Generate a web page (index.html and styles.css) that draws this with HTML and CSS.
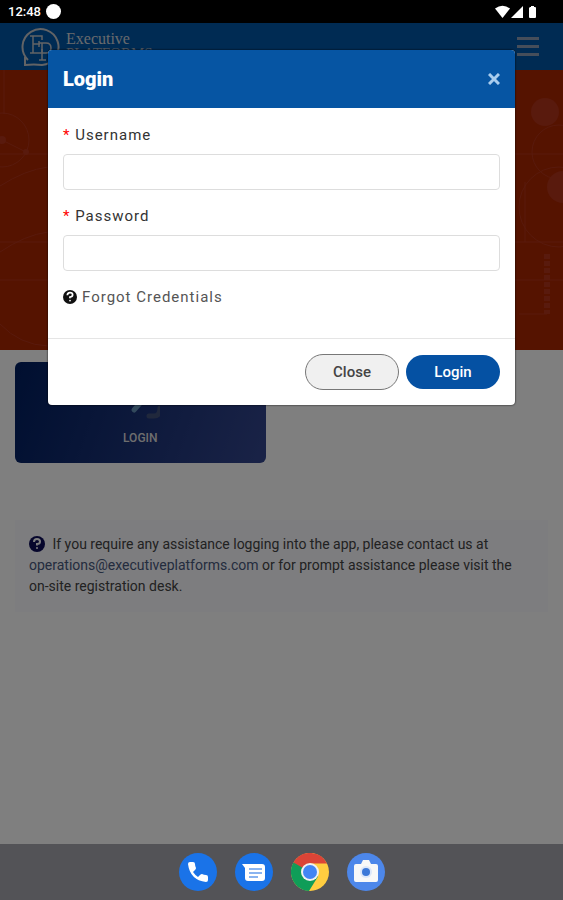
FILE: index.html
```html
<!DOCTYPE html>
<html lang="en">

<head>
    <meta charset="UTF-8" />
    <meta name="viewport" content="width=device-width, initial-scale=1" />
    <title>Login</title>
    <link rel="stylesheet" href="styles.css">
</head>

<body>

    <!-- Status bar -->
    <div class="status-bar">
        <span class="clock">12:48</span>
        <span class="status-dot"></span>
        <svg class="status-icons" width="44" height="14" viewBox="0 0 44 14" fill="#fff">
            <path d="M0 3.500Q7.500-2 15 3.500L7.500 13z" />
            <path d="M28 1v12H16z" />
            <path d="M35 2h1V1h3v1h1q1 0 1 1v9q0 1-1 1h-5q-1 0-1-1V3z" />
        </svg>
    </div>

    <div class="app">
        <header class="navbar">
            <a href="#" class="brand">
                <svg width="40" height="40" viewBox="0 0 40 40" fill="none" stroke="#c4c6ca">
                    <path d="M8 33A18 18 0 1 1 22 38Q14 37 5 38V30" stroke-width="2" />
                    <path d="M10 9h12v4M13 9v17M10 26h12v-4M13 17h7M19 14v6" stroke-width="1.500" />
                    <path d="M19 16h7q5 0 5 5t-5 5h-4M22 16v17M19 33h7" stroke-width="1.500" />
                </svg>
                <span class="brand-text">
                    <span class="brand-name">Executive</span>
                    <span class="brand-sub">PLATFORMS</span>
                </span>
            </a>
            <button class="menu-toggle" aria-label="Menu"><i></i><i></i><i></i></button>
        </header>

        <div class="hero">
            <svg class="hero-art" width="48" height="280" viewBox="0 0 48 280" fill="none">
                <path d="M4 0v44M0 84h48M0 172h48M0 210h48M0 116Q25 100 48 97M0 182Q25 165 48 162M0 254Q20 275 48 276" />
                <circle cx="2" cy="70" r="27" />
                <circle class="fill" cx="2" cy="70" r="4" />
                <path d="M2 70l24 12" />
                <circle class="fill" cx="26" cy="82" r="3" />
            </svg>
            <svg class="hero-art" width="48" height="280" viewBox="0 0 48 280" fill="none">
                <path d="M0 84h48M0 172h48M0 210h48M4 244h28M10 112v60" />
                <circle cx="44" cy="82" r="27" />
                <circle cx="44" cy="137" r="40" />
                <circle class="fill" cx="30" cy="42" r="14" />
                <circle class="fill" cx="48" cy="117" r="16" />
                <path d="M32 184v60" stroke-width="6" stroke-dasharray="5 2" />
            </svg>
        </div>

        <main class="content">
            <a href="#" class="tile">
                <svg width="40" height="40" viewBox="0 0 40 40" fill="none" stroke-width="5" stroke-linecap="round">
                    <path d="M14 31l8-9" stroke="#6592b8" />
                    <path d="M29 37h5q6 0 6-8" stroke="#405078" />
                </svg>
                <span>LOGIN</span>
            </a>

            <p class="help">
                <svg class="help-icon" width="16" height="16" viewBox="0 0 16 16">
                    <circle cx="8" cy="8" r="8" fill="#0c0c58" />
                    <path d="M5 6q0-3 3-3t3 2.500Q11 8 8 8v1.500" fill="none" stroke="#fafaff" stroke-width="2" />
                    <circle cx="8" cy="12" r="1" fill="#fafaff" />
                </svg>
                If you require any assistance logging into the app, please contact us at
                <a href="mailto:operations@executiveplatforms.com">operations@executiveplatforms.com</a>
                or for prompt assistance please visit the on-site registration desk.
            </p>
        </main>

        <!-- Login dialog -->
        <div class="overlay">
            <form class="modal" role="dialog" aria-labelledby="modal-title">
                <div class="modal-header">
                    <h1 id="modal-title">Login</h1>
                    <button type="button" class="modal-x" aria-label="Close dialog">
                        <svg width="12" height="12" viewBox="0 0 12 12" stroke="#a9cdee" stroke-width="3">
                            <path d="M1 1l10 10M11 1L1 11" />
                        </svg>
                    </button>
                </div>
                <div class="modal-body">
                    <label for="username"><span class="required">*</span> Username</label>
                    <input type="text" id="username">
                    <label for="password"><span class="required">*</span> Password</label>
                    <input type="password" id="password">
                    <a href="#" class="forgot">
                        <svg width="14" height="14" viewBox="0 0 16 16">
                            <circle cx="8" cy="8" r="8" fill="#111" />
                            <path d="M5 6q0-3 3-3t3 2.500Q11 8 8 8v1.500" fill="none" stroke="#fff" stroke-width="2" />
                            <circle cx="8" cy="12" r="1" fill="#fff" />
                        </svg>
                        Forgot Credentials
                    </a>
                </div>
                <div class="modal-footer">
                    <button type="button" class="btn btn-close">Close</button>
                    <button type="submit" class="btn btn-login">Login</button>
                </div>
            </form>
        </div>
    </div>

    <!-- Dock -->
    <nav class="dock">
        <a href="#" aria-label="Phone">
            <svg width="38" height="38" viewBox="0 0 38 38">
                <circle cx="19" cy="19" r="19" fill="#1a73e8" />
                <path d="M9 11q0-2 2-2h3q2 0 2 2 0 2 1 4 0 1-1 2l-2 2q2 3 5 5l2-2q1-1 2-1 2 1 4 1 2 0 2 2v3q0 2-2 2Q11 27 9 11z" fill="#fff" />
            </svg>
        </a>
        <a href="#" aria-label="Messages">
            <svg width="38" height="38" viewBox="0 0 38 38">
                <circle cx="19" cy="19" r="19" fill="#1a73e8" />
                <path d="M7 11h20q3 0 3 3v11q0 3-3 3H13q-3 0-3-3V15z" fill="#fff" />
                <path d="M14 16h13M14 20h13M14 24h9" stroke="#8ab4f0" stroke-width="2" />
            </svg>
        </a>
        <a href="#" aria-label="Chrome">
            <svg width="38" height="38" viewBox="0 0 38 38">
                <circle cx="19" cy="19" r="19" fill="#ffcd40" />
                <path d="M2.500 9.500A19 19 0 0 0 18 38l9-14.500L19 19z" fill="#0f9d58" />
                <path d="M2.500 9.500A19 19 0 0 1 36 10.500H19L11 22z" fill="#db4437" />
                <path d="M2.500 9.500L11 24l8-5z" fill="#0f9d58" />
                <circle cx="19" cy="19" r="9" fill="#f1f1f1" />
                <circle cx="19" cy="19" r="7" fill="#4285f4" />
            </svg>
        </a>
        <a href="#" aria-label="Camera">
            <svg width="38" height="38" viewBox="0 0 38 38">
                <circle cx="19" cy="19" r="19" fill="#4d87ea" />
                <path d="M9 11h5l2-4h6l2 4h5q2 0 2 2v14q0 2-2 2H9q-2 0-2-2V13q0-2 2-2z" fill="#f8f8f8" />
                <circle cx="19" cy="19" r="6" fill="#dce7fa" />
                <circle cx="19" cy="19" r="4" fill="#3c78d8" />
            </svg>
        </a>
    </nav>

</body>

</html>
```
FILE: styles.css
```css
* {
    box-sizing: border-box;
}

body {
    margin: 0;
    min-height: 100vh;
    display: flex;
    flex-direction: column;
    font-family: Roboto, "Liberation Sans", sans-serif;
    font-size: 14px;
    color: #333;
    background-color: #fff;
}

a {
    text-decoration: none;
}

svg {
    display: block;
}

button {
    font-family: inherit;
    cursor: pointer;
}

/* Status bar */
.status-bar {
    display: flex;
    align-items: center;
    gap: 5px;
    height: 23px;
    padding: 0 24px 0 8px;
    background-color: #000;
    color: #fff;
}

.clock {
    font-size: 13px;
    font-weight: 500;
}

.status-dot {
    width: 15px;
    height: 15px;
    border-radius: 50%;
    background-color: #fff;
}

.status-icons {
    margin-left: auto;
}

/* Page */
.app {
    position: relative;
    flex: 1;
}

.navbar {
    display: flex;
    justify-content: space-between;
    height: 47px;
    padding: 4px 20px;
    background-color: #0056a6;
}

.brand {
    display: flex;
    gap: 6px;
    color: #d0d4da;
    font-family: "Liberation Serif", serif;
}

.brand-text {
    display: flex;
    flex-direction: column;
    padding-top: 4px;
}

.brand-name {
    font-size: 16px;
    line-height: 16px;
}

.brand-sub {
    font-size: 15px;
    line-height: 12px;
    color: #a0aec0;
}

.menu-toggle {
    display: flex;
    flex-direction: column;
    justify-content: center;
    gap: 5px;
    padding: 0 4px;
    border: none;
    background: none;
}

.menu-toggle i {
    width: 22px;
    height: 3px;
    background-color: #8c9cb4;
}

.hero {
    display: flex;
    justify-content: space-between;
    height: 280px;
    background-color: #aa2600;
}

.hero-art {
    stroke: #b2341a;
}

.hero-art .fill {
    fill: #b2341a;
    stroke: none;
}

.content {
    padding: 12px 15px;
}

.tile {
    display: flex;
    flex-direction: column;
    align-items: center;
    justify-content: flex-end;
    gap: 11px;
    width: 47%;
    height: 101px;
    padding-bottom: 17px;
    border-radius: 6px;
    background: linear-gradient(110deg, #001e60, #34468e);
    color: #ddd;
    font-size: 12px;
    font-weight: 500;
    line-height: 16px;
}

.help {
    margin: 57px 0 0;
    padding: 14px 14px 15px;
    background-color: #fafaff;
    color: #444;
    line-height: 21px;
}

.help-icon {
    display: inline-block;
    margin-right: 4px;
    vertical-align: -3px;
}

.help a {
    color: #48587c;
}

/* Login dialog */
.overlay {
    position: absolute;
    inset: 0;
    padding: 27px 48px;
    background-color: rgba(0, 0, 0, 0.5);
}

.modal {
    max-width: 500px;
    margin: 0 auto;
    border-radius: 4px;
    background-color: #fff;
    box-shadow: 0 0 2px #000;
    overflow: hidden;
}

.modal-header {
    display: flex;
    align-items: center;
    justify-content: space-between;
    height: 58px;
    padding: 0 15px;
    background-color: #0655a3;
    color: #fff;
}

.modal-header h1 {
    margin: 0;
    font-size: 20px;
    font-weight: 900;
}

.modal-x {
    padding: 0;
    border: none;
    background: none;
}

.modal-body {
    padding: 16px 15px 30px;
}

.modal-body label {
    display: block;
    margin-bottom: 8px;
    font-size: 15px;
    line-height: 22px;
    letter-spacing: 1px;
}

.required {
    color: #f00;
}

.modal-body input {
    display: block;
    width: 100%;
    height: 36px;
    margin-bottom: 15px;
    padding: 6px 12px;
    border: 1px solid #ddd;
    border-radius: 4px;
    font-size: 14px;
}

.forgot {
    display: flex;
    align-items: center;
    gap: 5px;
    color: #555;
    font-size: 15px;
    line-height: 22px;
    letter-spacing: 1px;
}

.modal-footer {
    display: flex;
    align-items: center;
    justify-content: flex-end;
    gap: 7px;
    padding: 15px;
    border-top: 1px solid #e5e5e5;
}

.btn {
    width: 94px;
    border-radius: 18px;
    font-size: 15px;
    font-weight: 500;
}

.btn-close {
    height: 36px;
    border: 1px solid #777;
    background-color: #f0f0f0;
    color: #444;
}

.btn-login {
    height: 34px;
    border: none;
    background-color: #0551a3;
    color: #fff;
}

/* Dock */
.dock {
    display: flex;
    align-items: center;
    justify-content: center;
    gap: 18px;
    height: 56px;
    background-color: #535357;
}
```
